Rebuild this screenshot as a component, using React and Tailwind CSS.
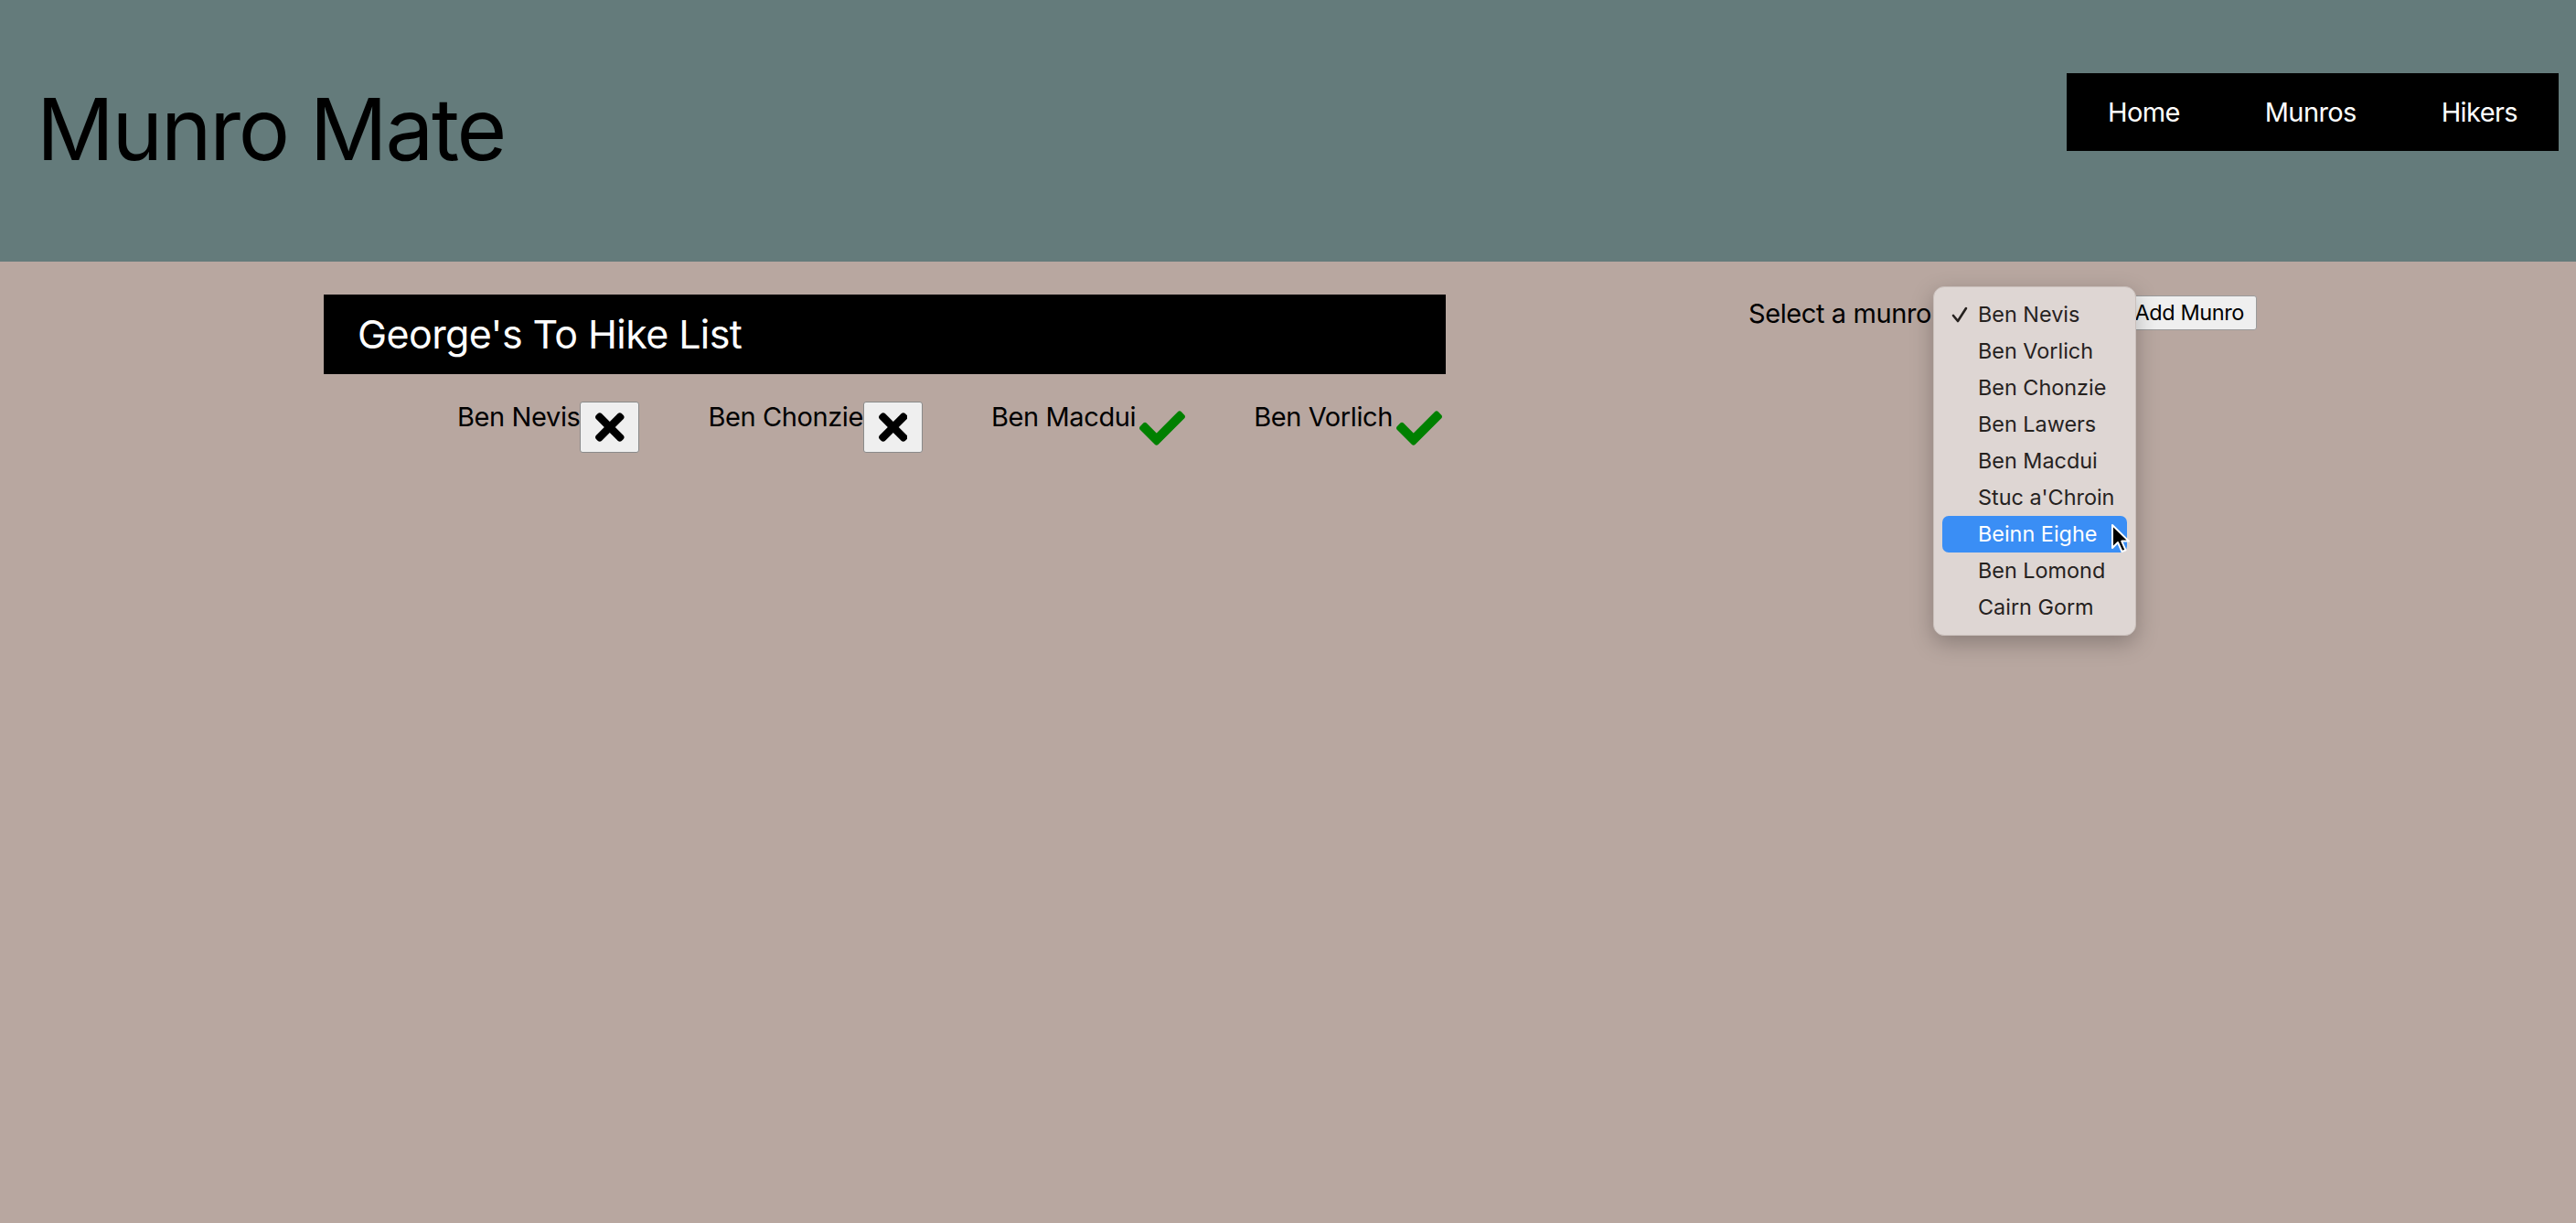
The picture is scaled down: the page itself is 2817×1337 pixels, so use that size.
import React from "react";

function TimesIcon({ size = 46 }) {
  return (
    <svg width={(size * 352) / 512} height={size} viewBox="0 0 352 512" fill="currentColor">
      <path d="M242.72 256l100.07-100.07c12.28-12.28 12.28-32.19 0-44.48l-22.24-22.24c-12.28-12.28-32.19-12.28-44.48 0L176 189.28 75.93 89.21c-12.28-12.28-32.19-12.28-44.48 0L9.21 111.45c-12.28 12.28-12.28 32.19 0 44.48L109.28 256 9.21 356.07c-12.280 12.28-12.28 32.19 0 44.48l22.24 22.24c12.28 12.28 32.2 12.28 44.48 0L176 322.72l100.07 100.07c12.28 12.28 32.2 12.28 44.48 0l22.24-22.24c12.28-12.28 12.28-32.19 0-44.48L242.72 256z" />
    </svg>
  );
}

function CheckIcon({ size = 50 }) {
  return (
    <svg width={size} height={size} viewBox="0 0 512 512" fill="#008000">
      <path d="M173.898 439.404l-166.4-166.4c-9.997-9.997-9.997-26.206 0-36.204l36.203-36.204c9.997-9.998 26.207-9.998 36.204 0L192 312.69 432.095 72.596c9.997-9.997 26.207-9.997 36.204 0l36.203 36.204c9.997 9.997 9.997 26.206 0 36.204l-294.4 294.401c-9.998 9.997-26.207 9.997-36.204-.001z" />
    </svg>
  );
}

const items = [
  { name: "Ben Nevis", done: false },
  { name: "Ben Chonzie", done: false },
  { name: "Ben Macdui", done: true },
  { name: "Ben Vorlich", done: true },
];

const options = [
  "Ben Nevis",
  "Ben Vorlich",
  "Ben Chonzie",
  "Ben Lawers",
  "Ben Macdui",
  "Stuc a'Chroin",
  "Beinn Eighe",
  "Ben Lomond",
  "Cairn Gorm",
];

export default function App() {
  return (
    <div className="min-h-screen w-full bg-[#b8a7a0] font-[Inter,sans-serif] text-black">
      <header className="flex h-[286px] items-center justify-between bg-[#647b7b] pl-[40px] pr-[19px]">
        <h1 className="mb-[4px] text-[94px] leading-none font-normal tracking-[-2.3px]">Munro Mate</h1>
        <nav className="mt-[80px] flex h-[85px] w-[538px] items-center justify-between self-start bg-black px-[45px]">
          <a className="text-[29px] tracking-[-0.6px] text-white">Home</a>
          <a className="text-[29px] tracking-[-0.6px] text-white">Munros</a>
          <a className="text-[29px] tracking-[-0.6px] text-white">Hikers</a>
        </nav>
      </header>

      <main className="flex pl-[354px] pt-[36px]">
        <section className="w-[1227px]">
          <h2 className="flex h-[87px] items-center bg-black pl-[37px] text-[43px] font-normal tracking-[-0.6px] text-white">
            George's To Hike List
          </h2>
          <ul className="mt-[29px] flex justify-end gap-[75px] pr-[4px]">
            {items.map((it) => (
              <li key={it.name} className="flex items-start">
                <span className="text-[29px] leading-[35px] tracking-[-0.4px] whitespace-nowrap">{it.name}</span>
                {it.done ? (
                  <span className="ml-[4px] mt-[5px]">
                    <CheckIcon size={50} />
                  </span>
                ) : (
                  <button className="mt-[1px] flex h-[56px] w-[65px] items-center justify-center rounded-[3px] border border-[#8a8a8a] bg-[#efefef] text-black">
                    <TimesIcon size={46} />
                  </button>
                )}
              </li>
            ))}
          </ul>
        </section>

        <div className="ml-[331px] mt-[1px] flex h-[38px] items-center self-start">
          <span className="w-[201px] whitespace-nowrap text-[29px] leading-none tracking-[-0.4px]">Select a munro</span>
          <div className="relative h-[38px] w-[216px]">
            <div className="absolute left-[1px] top-[-10px] z-10 w-[222px] rounded-[12px] border border-[#c9bfbb] bg-[#ded6d3] py-[10px] shadow-[0_8px_24px_rgba(0,0,0,0.25)]">
              {options.map((o, i) => {
                const hi = o === "Beinn Eighe";
                return (
                  <div
                    key={o}
                    className={
                      hi
                        ? "relative mx-[9px] flex h-[40px] items-center whitespace-nowrap rounded-[7px] bg-[#3a8ef5] pl-[39px] text-[23.4px] text-white"
                        : "relative mx-[9px] flex h-[40px] items-center whitespace-nowrap pl-[39px] text-[23.4px] text-[#26221f]"
                    }
                  >
                    {i === 0 && (
                      <svg className="absolute left-[10px] top-[11px]" width="18" height="18" viewBox="0 0 18 18">
                        <polyline points="2,10 7,16 16,2" fill="none" stroke="#26221f" strokeWidth="2.6" strokeLinecap="round" strokeLinejoin="round" />
                      </svg>
                    )}
                    {o}
                  </div>
                );
              })}
              <svg className="absolute left-[193px] top-[258px]" width="26" height="36" viewBox="0 0 26 36">
                <path d="M2 2 L2 27 L8 21 L12.5 31 L16.5 29.3 L12.2 19.6 L20 19.6 Z" fill="#000" stroke="#fff" strokeWidth="2" strokeLinejoin="round" />
              </svg>
            </div>
          </div>
          <button className="ml-[3px] flex h-[38px] w-[136px] items-center justify-end whitespace-nowrap rounded-[3px] border border-[#9a9a9a] bg-[#efefef] pr-[13px] text-[23.5px] tracking-[-0.4px] text-black">
            Add Munro
          </button>
        </div>
      </main>
    </div>
  );
}
